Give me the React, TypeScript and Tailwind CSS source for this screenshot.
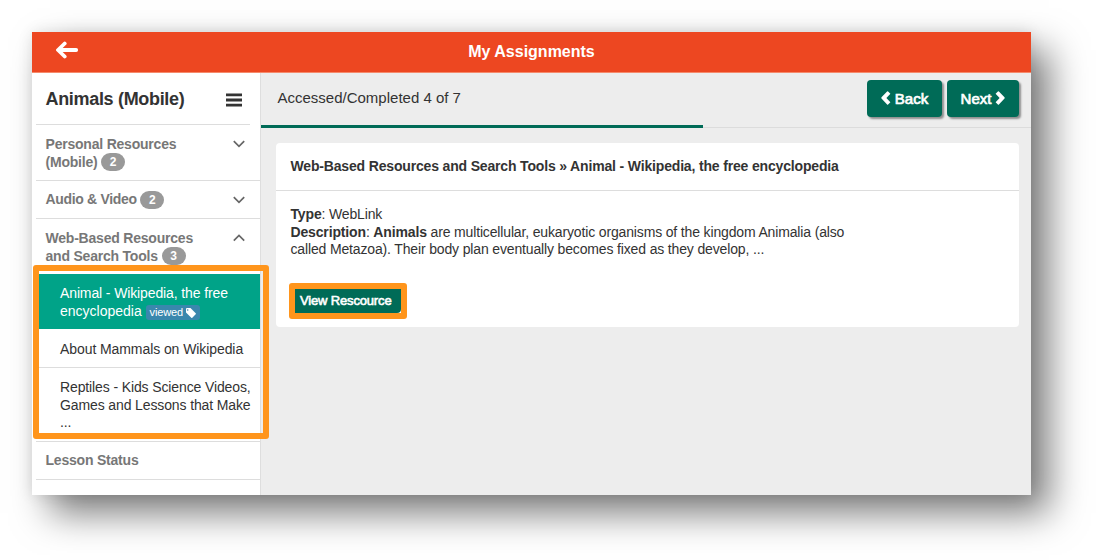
import React from "react";

const ROW = "flex justify-between border-b border-[#dddddd] pl-[9.5px] pr-[15px] text-[14px] leading-[17.5px] font-bold tracking-[-0.21px] text-[#777777]";

function Badge({ children }: { children: React.ReactNode }) {
  return (
    <span className="-my-1 inline-flex h-[18px] w-[24px] items-center justify-center rounded-full bg-[#999999] align-[0.5px] text-[12px] leading-none font-bold tracking-normal text-white">
      {children}
    </span>
  );
}

function Caret({ up = false }: { up?: boolean }) {
  return (
    <svg className="mt-[4px] h-[8px] w-[12px] shrink-0" viewBox="0 0 12 8" fill="none" stroke="#666" strokeWidth="1.7">
      <path d={up ? "M0.8 6.7 6 1.5l5.2 5.2" : "M0.8 1.2 6 6.4l5.2-5.2"} />
    </svg>
  );
}

function Angle({ right = false }: { right?: boolean }) {
  return (
    <svg className="mb-px h-[14px] w-[10px]" viewBox="0 0 10 14" fill="#fff">
      <path d={right ? "M0.600 2.700 2.900.500Q3.400 0 3.900.500L9.500 6.300Q10 7 9.500 7.500L3.900 13.400Q3.400 13.900 2.900 13.400L.6 11.200 4.600 7Z" : "M9.400 2.700 7.100.500Q6.600 0 6.100.500L.5 6.300Q0 7 .5 7.500L6.100 13.400Q6.600 13.900 7.100 13.400L9.400 11.200 5.400 7Z"} />
    </svg>
  );
}

export default function App() {
  return (
    <div className="h-[560px] w-[1096px] overflow-hidden bg-white p-8 font-['Liberation_Sans',sans-serif] text-[#333333]">
      <div className="flex h-[463px] w-[999px] flex-col bg-[#ededed] shadow-[18px_18px_35px_rgba(0,0,0,0.52),0_0_14px_rgba(0,0,0,0.1)]">
        <header className="relative flex h-[41px] shrink-0 items-center justify-center border-b border-[#f58a6c] bg-[#ed4721]">
          <svg className="absolute top-[9px] left-[24px] h-[18px] w-[23px]" viewBox="0 0 23 18" fill="none" stroke="#fff" strokeWidth="3.8" strokeLinecap="round" strokeLinejoin="round">
            <path d="M8.700 2.500 2 9l6.700 6.500M2.500 9H20.200" />
          </svg>
          <h1 className="text-[16px] leading-6 font-bold text-white"><span>My Assignments</span></h1>
        </header>
        <div className="flex min-h-0 flex-1">
          <aside className="w-[229px] shrink-0 border-r border-[#dedede] bg-white pl-1">
            <div className="mr-[10px] flex h-[52px] justify-between border-b border-[#dddddd] pt-[15px] pr-[8px] pl-[9.5px]">
              <h2 className="text-[18px] leading-[22px] font-bold tracking-[-0.32px]"><span>Animals (Mobile)</span></h2>
              <svg className="mt-[5px] h-[14px] w-[16px]" viewBox="0 0 16 14" fill="#333">
                <path d="M0 .5h16v2.800H0zM0 5.600h16v2.800H0zM0 10.700h16v2.800H0z" />
              </svg>
            </div>
            <div className={`${ROW} h-[56px] pt-[11px]`}>
              <div><span>Personal Resources</span><br /><span>(Mobile)</span> <Badge>2</Badge></div>
              <Caret />
            </div>
            <div className={`${ROW} h-[38px] pt-[10px]`}>
              <div><span className="tracking-[-0.33px]">Audio &amp; Video</span> <Badge>2</Badge></div>
              <span className="pt-px"><Caret /></span>
            </div>
            <div className={`${ROW} h-[55px] border-b-0 pt-[11px]`}>
              <div><span>Web-Based Resources</span><br /><span>and Search Tools</span> <Badge>3</Badge></div>
              <Caret up />
            </div>
            <div className="relative h-[168px] border-b border-[#dddddd] text-[14px] leading-[17.5px] tracking-[-0.12px]">
              <div className="h-[55px] bg-[#00a388] pt-[11px] pl-6 text-white">
                <span>Animal - Wikipedia, the free</span><br /><span className="tracking-normal">encyclopedia</span>{" "}
                <span className="-my-1 inline-flex h-[15px] items-center gap-[3px] rounded-[3px] bg-[#3a87ad] px-[4px] align-[-0.5px] text-[11px] leading-none">
                  <span>viewed</span>
                  <svg className="h-[10px] w-[10px]" viewBox="0 0 10 10" fill="#fff"><path fillRule="evenodd" d="M0 1v3.500l5.300 5.200q.5.500 1 0L9.700 6.300q.5-.5 0-1L4.500 0H1Q0 0 0 1Zm1.700.2a.8.8 0 1 1 0 1.600.8.8 0 0 1 0-1.600Z" /></svg>
                </span>
              </div>
              <div className="h-[39px] border-b border-[#dddddd] pt-[12px] pl-6 tracking-[-0.08px]"><span>About Mammals on Wikipedia</span></div>
              <div className="pt-[11px] pl-6 whitespace-nowrap"><span>Reptiles - Kids Science Videos,</span><br /><span>Games and Lessons that Make</span><br />...</div>
              <div className="absolute -top-[9px] -left-[3px] h-[174px] w-[236px] rounded-[3px] border-6 border-[#ff951c]" />
            </div>
            <div className={`${ROW} h-[38px] pt-[10px]`}><span>Lesson Status</span></div>
          </aside>
          <main className="min-w-0 flex-1">
            <div className="relative flex h-[55px] justify-between border-b border-[#dcdcdc] pt-[7px] pr-[12px] pl-[16.500px]">
              <div className="pt-[8px] text-[15px] leading-[20px]"><span>Accessed/Completed 4 of 7</span></div>
              <div className="flex gap-[5px] text-[15px] text-white [-webkit-text-stroke:0.7px_#fff]">
                <button className="flex h-[37px] w-[75px] items-center justify-center gap-[4px] rounded-[4px] bg-[#006b57] shadow-[2px_2px_2px_rgba(0,0,0,0.4)]"><Angle /><span className="pt-px">Back</span></button>
                <button className="flex h-[37px] w-[72px] items-center justify-center gap-[4px] rounded-[4px] bg-[#006b57] shadow-[2px_2px_2px_rgba(0,0,0,0.4)]"><span className="pt-px">Next</span><Angle right /></button>
              </div>
              <div className="absolute bottom-[-1px] left-0 h-[3px] w-[442px] bg-[#006b57]" />
            </div>
            <section className="mt-[15px] ml-[15px] h-[184px] w-[743px] rounded-[4px] bg-white text-[14px] leading-[17.5px] tracking-[-0.15px]">
              <h3 className="h-[48px] border-b border-[#dddddd] pt-[15px] pl-[14.500px] font-bold tracking-[-0.165px]"><span>Web-Based Resources and Search Tools » Animal - Wikipedia, the free encyclopedia</span></h3>
              <div className="pt-[15px] pl-[14.500px]">
                <p><span><b>Type</b>: WebLink</span></p>
                <p><span><b>Description</b>: <b>Animals</b> are multicellular, eukaryotic organisms of the kingdom Animalia (also</span></p>
                <p><span>called Metazoa). Their body plan eventually becomes fixed as they develop, ...</span></p>
              </div>
              <div className="mt-[24px] ml-[13px] h-[36px] w-[118px] rounded-[3px] border-6 border-[#ff951c]">
                <button className="flex h-[24px] w-[106px] items-center rounded-br-[4px] bg-[#006b57] pl-[5px] text-[13px] tracking-[-0.16px] text-white [-webkit-text-stroke:0.6px_#fff]"><span>View Rescource</span></button>
              </div>
            </section>
          </main>
        </div>
      </div>
    </div>
  );
}
